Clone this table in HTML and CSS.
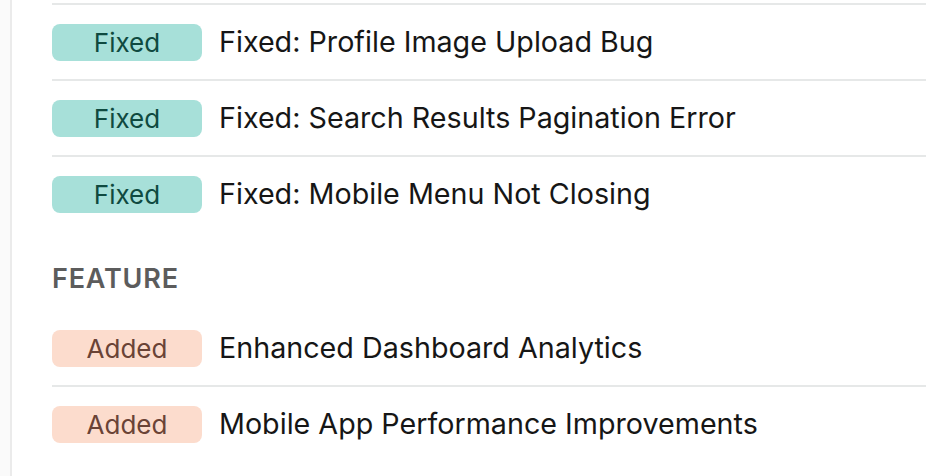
FILE: index.html
```html
<!DOCTYPE html>
<html lang="en">
<head>
<meta charset="utf-8">
<title>Changelog</title>
<link rel="stylesheet" href="styles.css">
</head>
<body>
<div class="layout">
  <aside class="rail"></aside>
  <main class="content">
    <ul class="list continued">
      <li class="row"><span class="badge fixed">Fixed</span><span class="title">Fixed: Profile Image Upload Bug</span></li>
      <li class="row"><span class="badge fixed">Fixed</span><span class="title">Fixed: Search Results Pagination Error</span></li>
      <li class="row"><span class="badge fixed">Fixed</span><span class="title">Fixed: Mobile Menu Not Closing</span></li>
    </ul>
    <section class="group">
      <h2 class="group-title">FEATURE</h2>
      <ul class="list">
        <li class="row"><span class="badge added">Added</span><span class="title">Enhanced Dashboard Analytics</span></li>
        <li class="row"><span class="badge added">Added</span><span class="title">Mobile App Performance Improvements</span></li>
      </ul>
    </section>
  </main>
</div>
</body>
</html>
```

FILE: styles.css
```css
html, body {
  margin: 0;
  padding: 0;
  background: #ffffff;
  font-family: Inter, "Noto Sans", sans-serif;
}

.layout {
  display: flex;
  min-height: 476px;
}

.rail {
  width: 10px;
  flex: none;
  background: #fafafa;
  border-right: 2px solid #ebebeb;
}

.content {
  flex: 1;
  padding: 3px 0 0 40px;
}

.list {
  list-style: none;
  margin: 0;
  padding: 0;
}

.row {
  display: flex;
  align-items: center;
  gap: 17px;
  padding: 18px 0;
  height: 38px;
}

.row + .row,
.continued .row:first-child {
  border-top: 2px solid #e6e8e8;
}

.badge {
  flex: none;
  width: 150px;
  height: 37px;
  border-radius: 8px;
  display: flex;
  align-items: center;
  justify-content: center;
  font-size: 26px;
  font-weight: 400;
}

.badge.fixed {
  background: #a7e0d9;
  color: #0f4a40;
}

.badge.added {
  background: #fcdccd;
  color: #6a4336;
}

.title {
  font-size: 28.7px;
  line-height: 36px;
  color: #161616;
}

.group {
  margin-top: 30px;
}

.group-title {
  margin: 0 0 14px;
  font-size: 27px;
  line-height: 36px;
  font-weight: 600;
  letter-spacing: 0.03em;
  color: #5c5c5c;
}
```
